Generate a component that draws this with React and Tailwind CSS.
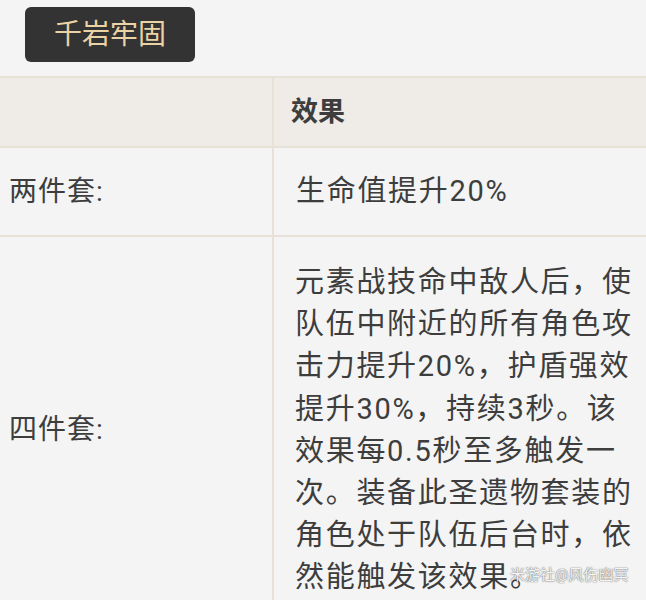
export default function App() {
  const font = { fontFamily: 'Roboto, "Noto Sans CJK SC", "Noto Sans", sans-serif' };
  return (
    <div className="relative w-[646px] h-[600px] overflow-hidden bg-[#f4f4f4] text-[#3d3d3d]" style={font}>
      <div className="pt-[7px] pl-[25px]">
        <div className="flex h-[55px] w-[170px] items-center justify-center rounded-[6px] bg-[#333333] text-[28px] leading-none text-[#ecd3a6]">
          千岩牢固
        </div>
      </div>
      <div className="mt-[14px] grid grid-cols-[274px_1fr] border-t-2 border-[#e8e1d8]">
        <div className="h-[70px] bg-[#efebe6] border-b-2 border-r-2 border-[#e8e1d8]"></div>
        <div className="flex h-[70px] items-center bg-[#efebe6] border-b-2 border-[#e8e1d8] pl-[17px] text-[27px] font-bold">
          效果
        </div>
        <div className="flex h-[89px] items-center border-b-2 border-r-2 border-[#e8e1d8] pl-[9px] text-[28px] tracking-[1px]">
          两件套:
        </div>
        <div className="flex h-[89px] items-center border-b-2 border-[#e8e1d8] pl-[22px] text-[29px] tracking-[1.7px]">
          生命值提升20%
        </div>
        <div className="flex items-center border-r-2 border-[#e8e1d8] pl-[9px] text-[28px] tracking-[1px]">
          四件套:
        </div>
        <div className="pl-[21px] pr-[10px] pt-[24px] pb-[24px] text-[29px] leading-[42.2px] tracking-[1.7px]">
          元素战技命中敌人后，使队伍中附近的所有角色攻击力提升20%，护盾强效提升30%，持续3秒。该效果每0.5秒至多触发一次。装备此圣遗物套装的角色处于队伍后台时，依然能触发该效果。
        </div>
      </div>
      <div className="absolute left-[510px] top-[568px] text-[15px] leading-none text-[#f4f4f4] [text-shadow:0_0_1px_rgba(0,0,0,0.6),0_0_2px_rgba(0,0,0,0.3)]">
        米游社@风伤幽冥
      </div>
    </div>
  );
}
